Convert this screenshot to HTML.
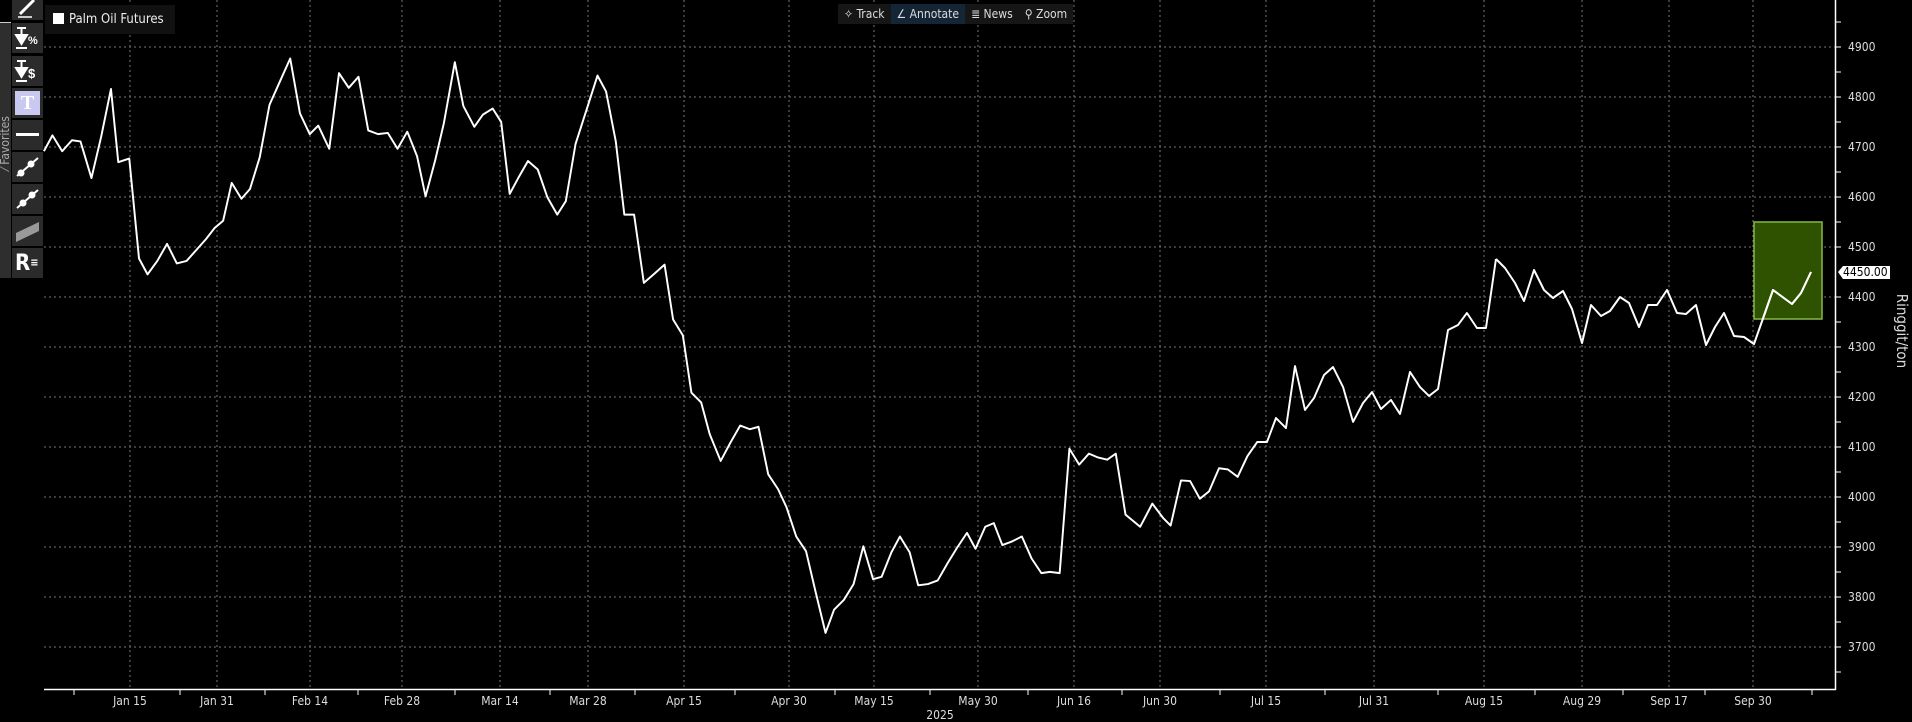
<!DOCTYPE html>
<html><head><meta charset="utf-8"><style>
body{margin:0;width:1912px;height:721px;background:#000;overflow:hidden;font-family:"DejaVu Sans Condensed","Liberation Sans",sans-serif;color:#ddd;position:relative}
.btn{position:absolute;left:12px;width:31px;height:30px;background:#2b2b2b;color:#fff;font-size:20px;text-align:center;line-height:30px;font-weight:bold}
.xl{position:absolute;top:694px;font-size:12px;color:#ddd;transform:translateX(-50%)}
.yl{position:absolute;left:1848px;font-size:12px;color:#ddd}
</style></head><body>
<svg width="1912" height="721" style="position:absolute;left:0;top:0">
<g stroke="#777" stroke-dasharray="2,3" stroke-width="1">
<line x1="44" x2="1835" y1="47" y2="47"/><line x1="44" x2="1835" y1="97" y2="97"/><line x1="44" x2="1835" y1="147" y2="147"/><line x1="44" x2="1835" y1="197" y2="197"/><line x1="44" x2="1835" y1="247" y2="247"/><line x1="44" x2="1835" y1="297" y2="297"/><line x1="44" x2="1835" y1="347" y2="347"/><line x1="44" x2="1835" y1="397" y2="397"/><line x1="44" x2="1835" y1="447" y2="447"/><line x1="44" x2="1835" y1="497" y2="497"/><line x1="44" x2="1835" y1="547" y2="547"/><line x1="44" x2="1835" y1="597" y2="597"/><line x1="44" x2="1835" y1="647" y2="647"/>
<line x1="130" x2="130" y1="0" y2="689"/><line x1="217" x2="217" y1="0" y2="689"/><line x1="310" x2="310" y1="0" y2="689"/><line x1="402" x2="402" y1="0" y2="689"/><line x1="500" x2="500" y1="0" y2="689"/><line x1="588" x2="588" y1="0" y2="689"/><line x1="684" x2="684" y1="0" y2="689"/><line x1="789" x2="789" y1="0" y2="689"/><line x1="874" x2="874" y1="0" y2="689"/><line x1="978" x2="978" y1="0" y2="689"/><line x1="1074" x2="1074" y1="0" y2="689"/><line x1="1160" x2="1160" y1="0" y2="689"/><line x1="1266" x2="1266" y1="0" y2="689"/><line x1="1374" x2="1374" y1="0" y2="689"/><line x1="1484" x2="1484" y1="0" y2="689"/><line x1="1582" x2="1582" y1="0" y2="689"/><line x1="1669" x2="1669" y1="0" y2="689"/><line x1="1753" x2="1753" y1="0" y2="689"/>
</g>
<line x1="44" x2="1836" y1="689.5" y2="689.5" stroke="#fff" stroke-width="1.5"/>
<line x1="1835.5" x2="1835.5" y1="0" y2="690" stroke="#fff" stroke-width="1.5"/>
<g stroke="#fff"><line x1="1835" x2="1841" y1="47" y2="47"/><line x1="1835" x2="1841" y1="97" y2="97"/><line x1="1835" x2="1841" y1="147" y2="147"/><line x1="1835" x2="1841" y1="197" y2="197"/><line x1="1835" x2="1841" y1="247" y2="247"/><line x1="1835" x2="1841" y1="297" y2="297"/><line x1="1835" x2="1841" y1="347" y2="347"/><line x1="1835" x2="1841" y1="397" y2="397"/><line x1="1835" x2="1841" y1="447" y2="447"/><line x1="1835" x2="1841" y1="497" y2="497"/><line x1="1835" x2="1841" y1="547" y2="547"/><line x1="1835" x2="1841" y1="597" y2="597"/><line x1="1835" x2="1841" y1="647" y2="647"/><line x1="1835" x2="1841" y1="22" y2="22"/><line x1="1835" x2="1841" y1="72" y2="72"/><line x1="1835" x2="1841" y1="122" y2="122"/><line x1="1835" x2="1841" y1="172" y2="172"/><line x1="1835" x2="1841" y1="222" y2="222"/><line x1="1835" x2="1841" y1="322" y2="322"/><line x1="1835" x2="1841" y1="372" y2="372"/><line x1="1835" x2="1841" y1="422" y2="422"/><line x1="1835" x2="1841" y1="472" y2="472"/><line x1="1835" x2="1841" y1="522" y2="522"/><line x1="1835" x2="1841" y1="572" y2="572"/><line x1="1835" x2="1841" y1="622" y2="622"/><line x1="1835" x2="1841" y1="672" y2="672"/>
<line x1="74" x2="74" y1="689" y2="695"/><line x1="180" x2="180" y1="689" y2="695"/><line x1="265" x2="265" y1="689" y2="695"/><line x1="358" x2="358" y1="689" y2="695"/><line x1="455" x2="455" y1="689" y2="695"/><line x1="550" x2="550" y1="689" y2="695"/><line x1="635" x2="635" y1="689" y2="695"/><line x1="735" x2="735" y1="689" y2="695"/><line x1="835" x2="835" y1="689" y2="695"/><line x1="930" x2="930" y1="689" y2="695"/><line x1="1028" x2="1028" y1="689" y2="695"/><line x1="1122" x2="1122" y1="689" y2="695"/><line x1="1220" x2="1220" y1="689" y2="695"/><line x1="1325" x2="1325" y1="689" y2="695"/><line x1="1438" x2="1438" y1="689" y2="695"/><line x1="1535" x2="1535" y1="689" y2="695"/><line x1="1623" x2="1623" y1="689" y2="695"/><line x1="1705" x2="1705" y1="689" y2="695"/><line x1="1812" x2="1812" y1="689" y2="695"/></g>
<rect x="1754" y="222" width="68" height="97" fill="#2e5200" stroke="#86b84a" stroke-width="1.5"/>
<defs><clipPath id="c"><rect x="1754" y="222" width="68" height="97"/></clipPath></defs>
<g transform="scale(1.2194)"><polyline fill="none" stroke="#fff" stroke-width="1.6" stroke-linejoin="round" points="36,124 43,111 51,124 59,115 66,116 75,146 83,112 91,73 97,133 106,130 114,212 121,225 129,214 137,200 145,216 153,214 161,205 169,196 176,187 183,181 190,150 198,163 205,155 213,129 221,86 229,68 238,48 246,93 254,110 261,103 270,122 278,60 286,72 294,63 302,107 310,110 318,109 326,122 334,108 342,128 349,161 357,131 364,101 373,51 380,87 389,104 396,94 404,89 411,100 418,159 425,146 433,132 441,139 449,162 457,176 464,165 472,118 482,87 490,62 497,75 505,116 512,176 520,176 528,232 536,225 545,217 552,262 560,275 567,322 575,330 582,356 591,378 599,363 607,349 615,352 622,350 630,389 638,401 645,416 653,440 661,452 669,486 677,519 684,500 692,492 700,479 708,448 716,475 723,473 731,453 738,440 746,453 753,480 761,479 769,476 777,462 785,449 793,437 800,450 808,432 815,429 822,447 830,444 838,440 846,458 854,470 861,469 869,470 877,368 885,381 893,372 900,375 908,377 915,372 923,422 935,432 945,413 954,425 960,431 968.5,394 976,394.5 984,409 991.5,403 999.7,384 1007,385 1015,391 1023,374 1031,362.5 1039,362.5 1046.4,342.8 1054.6,351 1062,300.2 1070.2,336.2 1077.6,326.4 1085.8,307.5 1093.2,301 1101.4,317.4 1109.6,346 1117.8,330.5 1125.2,321.5 1132.5,335.4 1140.7,328 1148.1,339.5 1156.3,305 1164.5,317.4 1171.9,324.7 1179.3,319 1187.5,270.6 1195.7,266.5 1203,256.7 1211.2,269 1218.6,269 1226.8,212.4"/></g>
<polyline id="p" fill="none" stroke="#fff" stroke-width="2" stroke-linejoin="round" points="1496,259 1505,268 1515,283 1524,301 1534,270 1544,290 1553,298 1563,291 1572,309 1582,343 1591,305 1601,316 1610,311 1620,297 1629,303 1639,327 1648,305 1657,305 1667,290 1677,313 1686,314 1696,305 1706,345 1715,327 1724,313 1734,336 1744,337 1754,344 1773,290 1792,304 1801,293 1811,272"/>
<g clip-path="url(#c)"><use href="#p" style="stroke:#c4ec86"/></g>
<path d="M1838 272 L1843 266 L1890 266 L1890 279 L1843 279 Z" fill="#fff"/>
</svg>
<div style="position:absolute;left:1843px;top:265px;font-size:12px;color:#000">4450.00</div>
<div class="yl" style="top:40px">4900</div><div class="yl" style="top:90px">4800</div><div class="yl" style="top:140px">4700</div><div class="yl" style="top:190px">4600</div><div class="yl" style="top:240px">4500</div><div class="yl" style="top:290px">4400</div><div class="yl" style="top:340px">4300</div><div class="yl" style="top:390px">4200</div><div class="yl" style="top:440px">4100</div><div class="yl" style="top:490px">4000</div><div class="yl" style="top:540px">3900</div><div class="yl" style="top:590px">3800</div><div class="yl" style="top:640px">3700</div>
<div style="position:absolute;left:1862px;top:322px;font-size:15px;color:#ddd;transform:rotate(90deg);transform-origin:center;width:80px;text-align:center">Ringgit/ton</div>
<div class="xl" style="left:130px">Jan 15</div><div class="xl" style="left:217px">Jan 31</div><div class="xl" style="left:310px">Feb 14</div><div class="xl" style="left:402px">Feb 28</div><div class="xl" style="left:500px">Mar 14</div><div class="xl" style="left:588px">Mar 28</div><div class="xl" style="left:684px">Apr 15</div><div class="xl" style="left:789px">Apr 30</div><div class="xl" style="left:874px">May 15</div><div class="xl" style="left:978px">May 30</div><div class="xl" style="left:1074px">Jun 16</div><div class="xl" style="left:1160px">Jun 30</div><div class="xl" style="left:1266px">Jul 15</div><div class="xl" style="left:1374px">Jul 31</div><div class="xl" style="left:1484px">Aug 15</div><div class="xl" style="left:1582px">Aug 29</div><div class="xl" style="left:1669px">Sep 17</div><div class="xl" style="left:1753px">Sep 30</div>
<div class="xl" style="left:940px;top:708px">2025</div>
<div style="position:absolute;left:838px;top:4px;height:20px;display:flex;font-size:12px;line-height:20px;color:#ddd">
<div style="background:#161616;padding:0 6px">✧ Track</div><div style="background:#142536;padding:0 6px">∠ Annotate</div><div style="background:#161616;padding:0 6px">≣ News</div><div style="background:#161616;padding:0 6px">⚲ Zoom</div></div>
<div style="position:absolute;left:45px;top:5px;width:130px;height:29px;background:#111;font-size:13px;line-height:29px;color:#eee"><span style="display:inline-block;width:11px;height:11px;background:#fff;margin:0 5px 0 8px;vertical-align:-1px"></span>Palm Oil Futures</div>
<div style="position:absolute;left:0;top:22px;width:11px;height:256px;background:#2e2e2e"></div>
<div style="position:absolute;left:0;top:22px;width:11px;height:1px;background:#ccc"></div>
<div style="position:absolute;left:-28px;top:130px;width:66px;font-size:12px;color:#aaa;transform:rotate(-90deg)">⁄ Favorites</div>
<div class="btn" style="top:-10px"><svg width="31" height="30"><path d="M8 24 L22 10" stroke="#fff" stroke-width="3"/><path d="M6 27 H20" stroke="#fff" stroke-width="1.5"/></svg></div>
<div class="btn" style="top:23px"><svg width="31" height="30"><path d="M5 5 H14 M9.5 5 V14 M4 12 L9.5 21 L15 12 Z M4 25 H15" stroke="#fff" stroke-width="2" fill="#fff"/><text x="16" y="21" font-size="11" fill="#fff" font-family="Liberation Sans">%</text></svg></div>
<div class="btn" style="top:56px"><svg width="31" height="30"><path d="M5 5 H14 M9.5 5 V14 M4 12 L9.5 21 L15 12 Z M4 25 H15" stroke="#fff" stroke-width="2" fill="#fff"/><text x="16" y="22" font-size="13" font-weight="bold" fill="#fff" font-family="Liberation Sans">$</text></svg></div>
<div class="btn" style="top:88px"><div style="margin:3px;height:24px;background:#c8c8f0;color:#fff;font-family:'Liberation Serif',serif;line-height:24px">T</div></div>
<div class="btn" style="top:120px"><div style="margin:13px 4px;height:3px;background:#fff"></div></div>
<div class="btn" style="top:152px"><svg width="31" height="30"><line x1="5" y1="24" x2="26" y2="6" stroke="#fff" stroke-width="2"/><circle cx="9" cy="21" r="3.5" fill="#fff"/><circle cx="19" cy="12" r="3.5" fill="#fff"/></svg></div>
<div class="btn" style="top:184px"><svg width="31" height="30"><line x1="5" y1="24" x2="26" y2="6" stroke="#fff" stroke-width="2"/><circle cx="11" cy="19" r="3.5" fill="#fff"/><circle cx="20" cy="11" r="3.5" fill="#fff"/></svg></div>
<div class="btn" style="top:216px"><svg width="31" height="30"><path d="M4 17 L27 6 L27 15 L4 26Z" fill="#999"/></svg></div>
<div class="btn" style="top:248px;text-align:left;padding-left:3px;width:28px;font-size:22px">R<span style="font-size:11px;vertical-align:4px">≡</span></div>
</body></html>
